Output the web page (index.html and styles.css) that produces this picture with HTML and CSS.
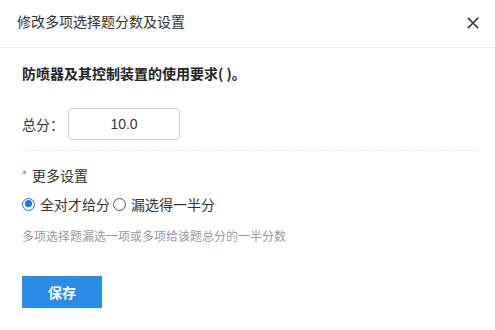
FILE: index.html
```html
<!DOCTYPE html>
<html lang="zh-CN">
<head>
<meta charset="utf-8">
<link rel="stylesheet" href="styles.css">
</head>
<body>
<div class="dialog">
  <div class="header">
    <span class="title">修改多项选择题分数及设置</span>
    <svg class="close" width="12" height="12" viewBox="0 0 12 12"><path d="M0.8 0.8 L11.2 11.2 M11.2 0.8 L0.8 11.2" stroke="#2f2f3a" stroke-width="1.6" fill="none"/></svg>
  </div>
  <div class="body">
    <div class="question">防喷器及其控制装置的使用要求( )。</div>
    <div class="score-row">
      <span class="label">总分：</span>
      <div class="input">10.0</div>
    </div>
    <div class="divider"></div>
    <div class="more"><span class="star">*</span>更多设置</div>
    <div class="radios">
      <label class="radio"><span class="dot checked"></span>全对才给分</label>
      <label class="radio"><span class="dot"></span>漏选得一半分</label>
    </div>
    <div class="hint">多项选择题漏选一项或多项给该题总分的一半分数</div>
    <button class="save">保存</button>
  </div>
</div>
</body>
</html>
```
FILE: styles.css
```css
* { box-sizing: border-box; }
html, body { margin: 0; padding: 0; background: #fff; }
body {
  font-family: "Noto Sans CJK SC", "Microsoft YaHei", "Liberation Sans", sans-serif;
  color: #333;
  font-size: 14px;
}
.dialog { width: 495px; height: 330px; }
.header {
  height: 48px;
  border-bottom: 1px solid #eeeeee;
  display: flex;
  align-items: center;
  justify-content: space-between;
  padding: 0 16px 5px 17px;
}
.title { font-size: 14px; line-height: 20px; color: #333; }
.close { display: block; margin-top: 3px; }
.body { padding: 0 17px 0 22px; }
.question {
  margin-top: 15px;
  font-size: 14px;
  line-height: 20px;
  font-weight: bold;
  color: #222;
}
.score-row {
  margin-top: 25px;
  display: flex;
  align-items: center;
  height: 32px;
}
.label { width: 46px; line-height: 20px; }
.input {
  width: 112px;
  height: 32px;
  border: 1px solid #d4d4d4;
  border-radius: 3px;
  text-align: center;
  line-height: 30px;
  font-family: "Liberation Sans", Arial, sans-serif;
  font-size: 14px;
  color: #333;
}
.divider {
  margin-top: 10px;
  border-top: 1px dashed #e6e6e6;
}
.more {
  margin-top: 14px;
  height: 20px;
  line-height: 20px;
  display: flex;
  align-items: center;
}
.star { color: #e84c3d; font-size: 11px; width: 10px; line-height: 12px; align-self: flex-start; margin-top: 3px; }
.radios {
  margin-top: 9px;
  display: flex;
  align-items: center;
  height: 20px;
}
.radio { display: flex; align-items: center; margin-right: 3px; }
.dot {
  width: 13px;
  height: 13px;
  border: 1px solid #555;
  border-radius: 50%;
  margin-right: 5px;
  position: relative;
}
.dot.checked { border: 1.5px solid #1a73e8; }
.dot.checked::after {
  content: "";
  position: absolute;
  left: 1.5px; top: 1.5px;
  width: 7px; height: 7px;
  border-radius: 50%;
  background: #1a73e8;
}
.hint {
  margin-top: 13px;
  font-size: 12px;
  line-height: 18px;
  color: #999;
}
.save {
  margin-top: 31px;
  width: 80px;
  height: 32px;
  border: none;
  background: #2a8ce4;
  color: #fff;
  font-family: "Noto Sans CJK SC", sans-serif;
  font-weight: bold;
  font-size: 14px;
  padding: 0;
  display: block;
}
```
